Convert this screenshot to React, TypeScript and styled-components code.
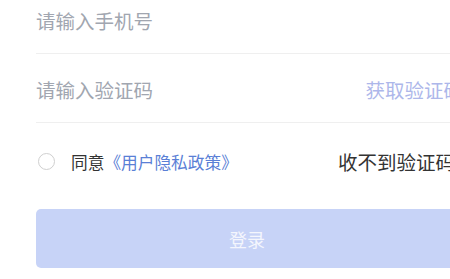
import React, { useState } from "react";
import { styled, createGlobalStyle } from "styled-components";

const GlobalStyle = createGlobalStyle`
  html, body {
    margin: 0;
    padding: 0;
    background: #ffffff;
    overflow: hidden;
  }
  body {
    font-family: "Noto Sans CJK SC", "Noto Sans", sans-serif;
  }
`;

const Form = styled.form`
  width: 428px;
  margin: -15px 0 0 36px;
  display: flex;
  flex-direction: column;
`;

const FieldRow = styled.div`
  height: 69px;
  padding-top: 3px;
  box-sizing: border-box;
  display: flex;
  align-items: center;
  border-bottom: 1px solid #efefef;
`;

const Input = styled.input`
  flex: 1;
  min-width: 0;
  border: none;
  outline: none;
  padding: 0;
  background: transparent;
  font-family: inherit;
  font-size: 19.5px;
  color: #333;

  &::placeholder {
    color: #a1a6b0;
  }
`;

const CodeButton = styled.button`
  flex: none;
  border: none;
  background: transparent;
  padding: 0 1px 0 0;
  font-family: inherit;
  font-size: 19.5px;
  color: #adb7ea;
  white-space: nowrap;
  cursor: pointer;
`;

const AgreeRow = styled.div`
  height: 76px;
  display: flex;
  align-items: center;
  padding-top: 1px;
  box-sizing: border-box;
`;

const Radio = styled.span<{ $checked: boolean }>`
  flex: none;
  width: 15px;
  height: 15px;
  margin: 0 16px 0 2px;
  border-radius: 50%;
  border: 1px solid ${(p) => (p.$checked ? "#5a7fd6" : "#cfcfcf")};
  background: ${(p) => (p.$checked ? "#5a7fd6" : "transparent")};
  cursor: pointer;
`;

const AgreeText = styled.span`
  font-size: 16.7px;
  color: #333;
  white-space: nowrap;
`;

const Link = styled.span`
  color: #5a7fd6;
`;

const Help = styled.span`
  margin-left: auto;
  padding-right: 9px;
  font-size: 19.5px;
  color: #333;
  white-space: nowrap;
`;

const Submit = styled.button`
  margin-top: 10px;
  width: 422px;
  height: 59px;
  border: none;
  border-radius: 5px;
  background: #c7d3f7;
  color: #f4f6fd;
  font-family: inherit;
  font-size: 18px;
`;

export default function App() {
  const [agreed, setAgreed] = useState(false);

  return (
    <>
      <GlobalStyle />
      <Form onSubmit={(e) => e.preventDefault()}>
        <FieldRow>
          <Input type="tel" placeholder="请输入手机号" />
        </FieldRow>
        <FieldRow>
          <Input type="text" placeholder="请输入验证码" />
          <CodeButton type="button">获取验证码</CodeButton>
        </FieldRow>
        <AgreeRow>
          <Radio $checked={agreed} onClick={() => setAgreed(!agreed)} />
          <AgreeText>
            同意<Link>《用户隐私政策》</Link>
          </AgreeText>
          <Help>收不到验证码</Help>
        </AgreeRow>
        <Submit type="submit" disabled={!agreed}>
          登录
        </Submit>
      </Form>
    </>
  );
}
